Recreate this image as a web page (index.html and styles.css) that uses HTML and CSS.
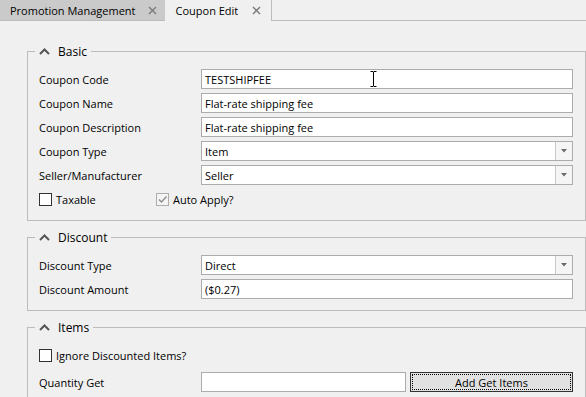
FILE: index.html
```html
<!DOCTYPE html>
<html lang="en">
<head>
    <meta charset="UTF-8">
    <title>Coupon Edit</title>
    <link rel="stylesheet" href="styles.css">
</head>
<body>
<svg style="display:none;">
    <symbol id="icon-close" viewBox="0 0 9 9">
        <path d="M1 1L8 8M8 1L1 8" stroke="#7a7a7a" stroke-width="1.4" fill="none"/>
    </symbol>
    <symbol id="icon-caret" viewBox="0 0 11 7">
        <path d="M1 6L5.5 1.5L10 6" stroke="#555" stroke-width="2" fill="none"/>
    </symbol>
    <symbol id="icon-drop" viewBox="0 0 6 4">
        <path d="M0 0h6L3 3.5z" fill="#6b6b6b"/>
    </symbol>
</svg>

<div class="tabs">
    <div class="tab">
        <span>Promotion Management</span>
        <svg class="close"><use href="#icon-close"/></svg>
    </div>
    <div class="tab active">
        <span>Coupon Edit</span>
        <svg class="close"><use href="#icon-close"/></svg>
    </div>
</div>

<div class="page">
    <fieldset class="group">
        <legend><svg class="caret"><use href="#icon-caret"/></svg><span>Basic</span></legend>
        <div class="row">
            <label>Coupon Code</label>
            <div class="field">TESTSHIPFEE
                <svg class="ibeam" viewBox="0 0 7 16">
                    <path d="M0.5 0.5h2.5l0.5 0.5l0.5-0.5h2.5M3.5 1v14M0.5 15.5h2.5l0.5-0.5l0.5 0.5h2.5" stroke="#000" stroke-width="1" fill="none"/>
                </svg>
            </div>
        </div>
        <div class="row">
            <label>Coupon Name</label>
            <div class="field">Flat-rate shipping fee</div>
        </div>
        <div class="row">
            <label>Coupon Description</label>
            <div class="field">Flat-rate shipping fee</div>
        </div>
        <div class="row">
            <label>Coupon Type</label>
            <div class="field select"><span class="value">Item</span><span class="drop"><svg><use href="#icon-drop"/></svg></span></div>
        </div>
        <div class="row">
            <label>Seller/Manufacturer</label>
            <div class="field select"><span class="value">Seller</span><span class="drop"><svg><use href="#icon-drop"/></svg></span></div>
        </div>
        <div class="row checks">
            <div class="check first"><span class="box"></span>Taxable</div>
            <div class="check disabled"><span class="box"><svg viewBox="0 0 11 11"><path d="M2 5.5L4.5 8L9.5 2.5" stroke="#8c8c8c" stroke-width="1.3" fill="none"/></svg></span>Auto Apply?</div>
        </div>
    </fieldset>

    <fieldset class="group">
        <legend><svg class="caret"><use href="#icon-caret"/></svg><span>Discount</span></legend>
        <div class="row">
            <label>Discount Type</label>
            <div class="field select"><span class="value">Direct</span><span class="drop"><svg><use href="#icon-drop"/></svg></span></div>
        </div>
        <div class="row">
            <label>Discount Amount</label>
            <div class="field">($0.27)</div>
        </div>
    </fieldset>

    <fieldset class="group">
        <legend><svg class="caret"><use href="#icon-caret"/></svg><span>Items</span></legend>
        <div class="row checks">
            <div class="check"><span class="box"></span>Ignore Discounted Items?</div>
        </div>
        <div class="row qty">
            <label>Quantity Get</label>
            <div class="field short"></div>
            <button class="btn"><span>Add Get Items</span></button>
        </div>
        <div class="row spacer"></div>
    </fieldset>
</div>
</body>
</html>
```

FILE: styles.css
```css
body {
    font-family: "Open Sans", "Noto Sans", sans-serif;
    font-size: 11px;
    color: #000;
    background-color: #f0f0f0;
    margin: 0;
    overflow: hidden;
}

.tabs {
    display: flex;
    height: 20px;
    border-bottom: 1px solid #bcbcbc;
}

.tab {
    display: flex;
    align-items: center;
    gap: 12px;
    height: 20px;
    padding: 0 8px 0 10px;
    background-color: #cacaca;
    white-space: nowrap;
}

.tab.active {
    height: 21px;
    gap: 14px;
    padding: 0 10px 0 11px;
    background-color: #f0f0f0;
    border-right: 1px solid #bcbcbc;
}

.close {
    width: 9px;
    height: 9px;
}

.page {
    padding: 22px 0 0 27px;
}

.group {
    border: 1px solid #bcbcbc;
    margin: 0 0 8px 0;
    padding: 10px 12px 11px 11px;
    min-width: 0;
}

.group legend {
    display: flex;
    align-items: center;
    gap: 8px;
    height: 16px;
    padding: 0 4px;
    margin-left: -4px;
    font-size: 12px;
}

.caret {
    width: 11px;
    height: 7px;
}

.row {
    display: flex;
    align-items: center;
    height: 20px;
    margin-top: 4px;
}

.row:first-of-type {
    margin-top: 0;
}

.row label {
    width: 162px;
    flex: none;
}

.field {
    position: relative;
    flex: 1;
    display: flex;
    align-items: center;
    height: 20px;
    box-sizing: border-box;
    border: 1px solid #acacac;
    background-color: #fff;
    padding: 0 3px;
    white-space: nowrap;
}

.field.select {
    padding-right: 0;
}

.select .value {
    flex: 1;
}

.drop {
    display: flex;
    align-items: center;
    justify-content: center;
    width: 16px;
    height: 18px;
    border-left: 1px solid #c8c8c8;
    background-color: #f5f5f5;
}

.drop svg {
    width: 6px;
    height: 4px;
}

.ibeam {
    position: absolute;
    left: 168px;
    top: 1px;
    width: 7px;
    height: 16px;
}

.checks {
    margin-top: 4px;
}

.check {
    display: flex;
    align-items: center;
    gap: 4px;
}

.check.first {
    width: 117px;
}

.box {
    display: flex;
    width: 13px;
    height: 13px;
    box-sizing: border-box;
    border: 1px solid #333;
    background-color: #fff;
}

.check.disabled .box {
    border-color: #adadad;
    background-color: #f4f4f4;
}

.box svg {
    width: 11px;
    height: 11px;
}

.row.qty {
    margin-top: 7px;
}

.field.short {
    flex: none;
    width: 205px;
}

.btn {
    width: 163px;
    height: 20px;
    margin-left: 4px;
    padding: 1px;
    border: 1px solid #333;
    background-color: #e1e1e1;
    font: inherit;
    color: #000;
}

.btn span {
    display: flex;
    align-items: center;
    justify-content: center;
    height: 100%;
    box-sizing: border-box;
    border: 1px dotted #000;
}

.row.spacer {
    height: 20px;
}
```
